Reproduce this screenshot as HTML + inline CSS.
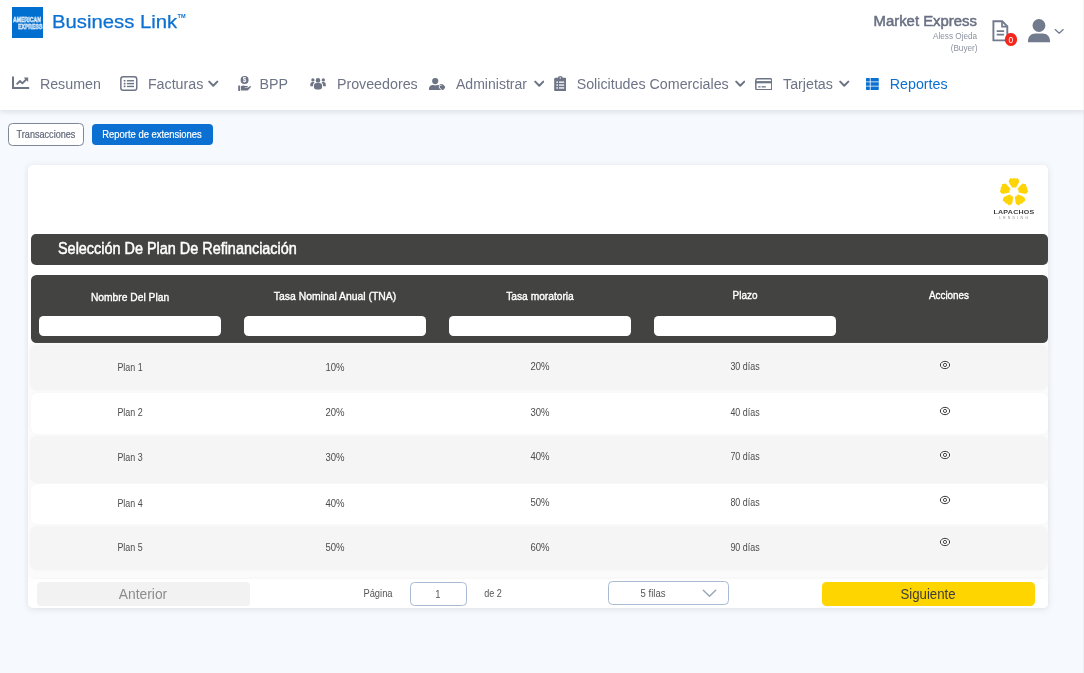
<!DOCTYPE html>
<html lang="es">
<head>
<meta charset="utf-8">
<title>Business Link</title>
<style>
*{box-sizing:border-box;margin:0;padding:0}
html,body{width:1084px;height:673px;overflow:hidden}
body{background:#f6f9fd;font-family:"Liberation Sans", sans-serif;position:relative}
</style>
</head>
<body>
<div style="position:absolute;left:0;top:0;width:1084px;height:673px;will-change:transform">
<div style="position:absolute;left:0px;top:0px;width:1084.00px;height:110.00px;background:#fff;border-radius:0px;box-shadow:0 2px 5px rgba(95,100,115,.17);"></div>
<div style="position:absolute;left:12px;top:7px;width:31.00px;height:30.50px;background:#016fd0;border-radius:0px;"></div>
<div style="position:absolute;top:16.07px;font-size:7.0px;line-height:7.0px;color:#2a86d8;font-weight:bold;white-space:nowrap;-webkit-text-stroke:.55px #fff;left:12.60px;transform-origin:0 50%;transform:scaleX(0.745);">AMERICAN</div>
<div style="position:absolute;top:22.87px;font-size:7.0px;line-height:7.0px;color:#2a86d8;font-weight:bold;white-space:nowrap;-webkit-text-stroke:.55px #fff;left:18.30px;transform-origin:0 50%;transform:scaleX(0.74);">EXPRESS</div>
<div style="position:absolute;top:12.32px;font-size:19px;line-height:19px;color:#0b70d1;font-weight:normal;white-space:nowrap;-webkit-text-stroke:.25px #0b70d1;left:52.20px;transform-origin:0 50%;transform:scaleX(1.068);">Business Link</div>
<div style="position:absolute;top:13.86px;font-size:5.6px;line-height:5.6px;color:#0b70d1;font-weight:bold;white-space:nowrap;left:177.60px;transform-origin:0 50%;transform:scaleX(1.0);">TM</div>
<div style="position:absolute;top:76.64px;font-size:14.25px;line-height:14.25px;color:#6d7486;font-weight:normal;white-space:nowrap;left:39.90px;transform-origin:0 50%;transform:scaleX(1);">Resumen</div>
<div style="position:absolute;top:76.64px;font-size:14.25px;line-height:14.25px;color:#6d7486;font-weight:normal;white-space:nowrap;left:147.90px;transform-origin:0 50%;transform:scaleX(1);">Facturas</div>
<div style="position:absolute;top:76.64px;font-size:14.25px;line-height:14.25px;color:#6d7486;font-weight:normal;white-space:nowrap;left:259.50px;transform-origin:0 50%;transform:scaleX(1);">BPP</div>
<div style="position:absolute;top:76.64px;font-size:14.25px;line-height:14.25px;color:#6d7486;font-weight:normal;white-space:nowrap;left:336.90px;transform-origin:0 50%;transform:scaleX(1);">Proveedores</div>
<div style="position:absolute;top:76.64px;font-size:14.25px;line-height:14.25px;color:#6d7486;font-weight:normal;white-space:nowrap;left:456.20px;transform-origin:0 50%;transform:scaleX(0.985);">Administrar</div>
<div style="position:absolute;top:76.64px;font-size:14.25px;line-height:14.25px;color:#6d7486;font-weight:normal;white-space:nowrap;left:576.70px;transform-origin:0 50%;transform:scaleX(1);">Solicitudes Comerciales</div>
<div style="position:absolute;top:76.64px;font-size:14.25px;line-height:14.25px;color:#6d7486;font-weight:normal;white-space:nowrap;left:783.00px;transform-origin:0 50%;transform:scaleX(1);">Tarjetas</div>
<div style="position:absolute;top:76.64px;font-size:14.25px;line-height:14.25px;color:#0b70d1;font-weight:normal;white-space:nowrap;left:889.80px;transform-origin:0 50%;transform:scaleX(1);">Reportes</div>
<svg style="position:absolute;left:208.4px;top:80.2px;" width="10.5" height="8" viewBox="0 0 10.5 8"><path d="M1.2 1.6 L5.25 5.8 L9.3 1.6" fill="none" stroke="#6d7486" stroke-width="2" stroke-linecap="round" stroke-linejoin="round"/></svg>
<svg style="position:absolute;left:533.9px;top:80.2px;" width="10.5" height="8" viewBox="0 0 10.5 8"><path d="M1.2 1.6 L5.25 5.8 L9.3 1.6" fill="none" stroke="#6d7486" stroke-width="2" stroke-linecap="round" stroke-linejoin="round"/></svg>
<svg style="position:absolute;left:734.9px;top:80.2px;" width="10.5" height="8" viewBox="0 0 10.5 8"><path d="M1.2 1.6 L5.25 5.8 L9.3 1.6" fill="none" stroke="#6d7486" stroke-width="2" stroke-linecap="round" stroke-linejoin="round"/></svg>
<svg style="position:absolute;left:839.1px;top:80.2px;" width="10.5" height="8" viewBox="0 0 10.5 8"><path d="M1.2 1.6 L5.25 5.8 L9.3 1.6" fill="none" stroke="#6d7486" stroke-width="2" stroke-linecap="round" stroke-linejoin="round"/></svg>
<svg style="position:absolute;left:12px;top:75.5px;" width="18" height="14" viewBox="0 0 18 14"><path d="M1 0.4V12H17.2" fill="none" stroke="#6d7486" stroke-width="2"/><path d="M4.6 8.4L8 5l2.4 2.3L14.6 3" fill="none" stroke="#6d7486" stroke-width="1.8" stroke-linejoin="round"/><path d="M11.6 1.4h4.6v4.6z" fill="#6d7486"/></svg>
<svg style="position:absolute;left:119.6px;top:76.2px;" width="18" height="15.4" viewBox="0 0 18 15.4"><rect x="0.85" y="0.85" width="15.900" height="13.500" rx="2.300" fill="none" stroke="#6d7486" stroke-width="1.500"/><g fill="#6d7486"><rect x="3.700" y="3.900" width="1.800" height="1.700" rx=".3"/><rect x="3.700" y="6.750" width="1.800" height="1.700" rx=".3"/><rect x="3.700" y="9.600" width="1.800" height="1.700" rx=".3"/><rect x="6.900" y="4.050" width="7.100" height="1.400"/><rect x="6.900" y="6.900" width="7.100" height="1.400"/><rect x="6.900" y="9.750" width="7.100" height="1.400"/></g></svg>
<svg style="position:absolute;left:237.6px;top:76px;" width="13" height="15.2" viewBox="0 0 13 15.2"><circle cx="6.6" cy="4" r="4" fill="#6d7486"/><text x="6.6" y="6.3" font-family='"Liberation Sans", sans-serif' font-size="6.4" font-weight="bold" text-anchor="middle" fill="#fff">$</text><rect x="0.2" y="9.6" width="2" height="5.4" rx=".4" fill="#6d7486"/><path d="M3 10.2c1.4-1 3-1 4.2-.2h2c.9 0 .9 1.3 0 1.3h-2.4v.5h3l2-1.6c.8-.6 1.6.4.9 1.1l-2.5 2.6c-.4.4-.8.6-1.400.6H3z" fill="#6d7486"/></svg>
<svg style="position:absolute;left:309.8px;top:77.6px;" width="16.6" height="12" viewBox="0 0 16.6 12"><g fill="#6d7486"><circle cx="8" cy="2.400" r="2.300"/><rect x="3.900" y="5.100" width="8.200" height="6.400" rx="2.700"/><circle cx="2.900" cy="1.900" r="1.650"/><circle cx="13.300" cy="1.900" r="1.650"/><path d="M0.300 8.200V6.400C.3 4.800 1.300 3.900 2.500 3.900h.9c.5 0 1 .2 1.300.5C3.600 5.100 3 6.200 3 7.500v.700z"/><path d="M15.800 8.200V6.400c0-1.600-1-2.500-2.200-2.500h-.9c-.5 0-1 .2-1.300.5 1.100.700 1.700 1.800 1.700 3.100v.700z"/></g></svg>
<svg style="position:absolute;left:429px;top:77.6px;" width="16.4" height="12.2" viewBox="0 0 16.4 12.2"><g fill="#6d7486"><circle cx="6.200" cy="3.100" r="3.100"/><path d="M0 12V10.600c0-2.100 1.700-3.500 3.700-3.500h.6c1.200.6 2.600.6 3.800 0h.600c.4 0 .8.100 1.200.2v2.400l2.300 2.300z"/><path d="M10.700 6.200h2.600c.3 0 .600.100.8.300l2.100 2.200c.3.300.3.700 0 1l-2.100 2.200c-.3.300-.7.300-1 0l-2.400-2.300z"/></g><circle cx="11.900" cy="7.500" r=".600" fill="#fff"/></svg>
<svg style="position:absolute;left:553.6px;top:75.6px;" width="12.6" height="15.6" viewBox="0 0 12.6 15.6"><rect x="0.2" y="1.800" width="12.200" height="13.600" rx="1.400" fill="#6d7486"/><path d="M3.800 2.400C3.800.8 5 0 6.300 0s2.500.8 2.500 2.400v1.400h-5z" fill="#6d7486"/><circle cx="6.300" cy="1.900" r=".7" fill="#fff"/><g fill="#fff"><rect x="2.400" y="5.400" width="1.500" height="1.500"/><rect x="2.400" y="8.300" width="1.500" height="1.500"/><rect x="2.400" y="11.200" width="1.500" height="1.500"/><rect x="5" y="5.500" width="5.200" height="1.300"/><rect x="5" y="8.400" width="5.200" height="1.300"/><rect x="5" y="11.300" width="5.200" height="1.300"/></g></svg>
<svg style="position:absolute;left:754.8px;top:77.6px;" width="17.6" height="12.6" viewBox="0 0 17.6 12.6"><rect x=".8" y=".8" width="16" height="11" rx="1.600" fill="none" stroke="#6d7486" stroke-width="1.500"/><rect x=".8" y="3.100" width="16" height="2.200" fill="#6d7486"/><rect x="3.200" y="8.200" width="2.400" height="1.300" fill="#6d7486"/><rect x="6.600" y="8.200" width="4.200" height="1.300" fill="#6d7486"/></svg>
<svg style="position:absolute;left:866.2px;top:77.9px;" width="12.8" height="12" viewBox="0 0 12.8 12"><g fill="#0b70d1"><path d="M0 1C0 .4.400 0 1 0h2.800v3.500H0z"/><rect x="0" y="4.250" width="3.800" height="3.500"/><path d="M0 8.500h3.800V12H1c-.6 0-1-.4-1-1z"/><path d="M4.600 0h7.200c.6 0 1 .4 1 1v2.500H4.600z"/><rect x="4.600" y="4.250" width="8.200" height="3.500"/><path d="M4.600 8.500h8.200V11c0 .6-.4 1-1 1H4.600z"/></g></svg>
<div style="position:absolute;top:13.76px;font-size:14.7px;line-height:14.7px;color:#697083;font-weight:normal;white-space:nowrap;-webkit-text-stroke:.5px #697083;right:106.60px;transform-origin:100% 50%;transform:scaleX(1.015);">Market Express</div>
<div style="position:absolute;top:32.03px;font-size:9.3px;line-height:9.3px;color:#8b91a0;font-weight:normal;white-space:nowrap;right:106.40px;transform-origin:100% 50%;transform:scaleX(0.88);">Aless Ojeda</div>
<div style="position:absolute;top:43.63px;font-size:9.3px;line-height:9.3px;color:#8b91a0;font-weight:normal;white-space:nowrap;right:106.40px;transform-origin:100% 50%;transform:scaleX(0.88);">(Buyer)</div>
<svg style="position:absolute;left:991.6px;top:19.8px;" width="17" height="22" viewBox="0 0 17 22"><path d="M1.400 1.300H10.200L15.300 6.400V20.400H1.400z" fill="none" stroke="#727a8d" stroke-width="1.900" stroke-linejoin="miter"/><path d="M10 1.400V6.600H15.200" fill="none" stroke="#727a8d" stroke-width="1.700"/><path d="M4.700 11.100h7.400M4.700 14.700h7.400" stroke="#727a8d" stroke-width="1.700"/></svg>
<div style="position:absolute;left:1003.6px;top:32.7px;width:13.6px;height:13.6px;border-radius:50%;background:#f4271c;color:#fff;font-size:9.5px;line-height:13.8px;text-align:center;transform:scaleX(.88)">0</div>
<svg style="position:absolute;left:1028px;top:19.4px;" width="22" height="23.4" viewBox="0 0 22 23.4"><circle cx="10.950" cy="6.500" r="6.450" fill="#727a8d"/><path d="M0 23.300v-1.300c0-4.700 3.600-7.400 7-7.400h8c3.400 0 7 2.700 7 7.400v1.300z" fill="#727a8d"/></svg>
<svg style="position:absolute;left:1054.3px;top:27.5px;" width="10.4" height="7.4" viewBox="0 0 10.4 7.4"><path d="M1.2 1.6 L5.2 5.2 L9.200000000000001 1.6" fill="none" stroke="#727a8d" stroke-width="1.3" stroke-linecap="round" stroke-linejoin="round"/></svg>
<div style="position:absolute;left:1083px;top:0px;width:1.00px;height:673.00px;background:rgba(120,120,120,.08);border-radius:0px;"></div>
<div style="position:absolute;left:8.2px;top:123px;width:75.600px;height:23px;border:1px solid #7e8697;border-radius:4.500px;background:#fff"></div>
<div style="position:absolute;top:129.90px;font-size:10.4px;line-height:10.4px;color:#5f6677;font-weight:normal;white-space:nowrap;-webkit-text-stroke:.2px #5f6677;left:46.10px;transform:translateX(-50%) scaleX(0.875);">Transacciones</div>
<div style="position:absolute;left:91.6px;top:123.8px;width:121.40px;height:21.50px;background:#0b70d1;border-radius:4px;"></div>
<div style="position:absolute;top:129.90px;font-size:10.4px;line-height:10.4px;color:#fff;font-weight:normal;white-space:nowrap;-webkit-text-stroke:.2px #fff;left:152.40px;transform:translateX(-50%) scaleX(0.905);">Reporte de extensiones</div>
<div style="position:absolute;left:28px;top:165px;width:1020.00px;height:443.00px;background:#fff;border-radius:5px;box-shadow:0 1px 6px rgba(90,95,108,.16);"></div>
<div style="position:absolute;left:31px;top:234px;width:1017.00px;height:31.00px;background:#434341;border-radius:5px;"></div>
<div style="position:absolute;top:241.16px;font-size:16px;line-height:16px;color:#fff;font-weight:normal;white-space:nowrap;-webkit-text-stroke:.5px #fff;left:58.30px;transform-origin:0 50%;transform:scaleX(0.901);">Selección De Plan De Refinanciación</div>
<div style="position:absolute;left:31px;top:275px;width:1017.00px;height:68.00px;background:#434341;border-radius:5.5px;"></div>
<div style="position:absolute;top:291.10px;font-size:11.7px;line-height:11.7px;color:#fff;font-weight:normal;white-space:nowrap;-webkit-text-stroke:.4px #fff;left:130.25px;transform:translateX(-50%) scaleX(0.879);">Nombre Del Plan</div>
<div style="position:absolute;top:290.20px;font-size:11.7px;line-height:11.7px;color:#fff;font-weight:normal;white-space:nowrap;-webkit-text-stroke:.4px #fff;left:335.00px;transform:translateX(-50%) scaleX(0.888);">Tasa Nominal Anual (TNA)</div>
<div style="position:absolute;top:290.20px;font-size:11.7px;line-height:11.7px;color:#fff;font-weight:normal;white-space:nowrap;-webkit-text-stroke:.4px #fff;left:539.90px;transform:translateX(-50%) scaleX(0.874);">Tasa moratoria</div>
<div style="position:absolute;top:289.40px;font-size:11.7px;line-height:11.7px;color:#fff;font-weight:normal;white-space:nowrap;-webkit-text-stroke:.4px #fff;left:744.60px;transform:translateX(-50%) scaleX(0.851);">Plazo</div>
<div style="position:absolute;top:289.30px;font-size:11.7px;line-height:11.7px;color:#fff;font-weight:normal;white-space:nowrap;-webkit-text-stroke:.4px #fff;left:949.00px;transform:translateX(-50%) scaleX(0.841);">Acciones</div>
<div style="position:absolute;left:39px;top:316px;width:182.30px;height:20.00px;background:#fff;border-radius:4.5px;"></div>
<div style="position:absolute;left:244px;top:316px;width:182.30px;height:20.00px;background:#fff;border-radius:4.5px;"></div>
<div style="position:absolute;left:448.6px;top:316px;width:182.30px;height:20.00px;background:#fff;border-radius:4.5px;"></div>
<div style="position:absolute;left:654px;top:316px;width:182.30px;height:20.00px;background:#fff;border-radius:4.5px;"></div>
<div style="position:absolute;left:28px;top:343px;width:1020.00px;height:235.00px;background:#fbfbfb;border-radius:0px;"></div>
<div style="position:absolute;left:30px;top:344.5px;width:1017.50px;height:45.60px;background:#f5f5f5;border-radius:7px;box-shadow:0 0 3px #f5f5f5;"></div>
<div style="position:absolute;top:362.23px;font-size:10.6px;line-height:10.6px;color:#4d4d4d;font-weight:normal;white-space:nowrap;left:130.25px;transform:translateX(-50%) scaleX(0.84);">Plan 1</div>
<div style="position:absolute;top:362.23px;font-size:10.6px;line-height:10.6px;color:#4d4d4d;font-weight:normal;white-space:nowrap;left:335.00px;transform:translateX(-50%) scaleX(0.9);">10%</div>
<div style="position:absolute;top:361.43px;font-size:10.6px;line-height:10.6px;color:#4d4d4d;font-weight:normal;white-space:nowrap;left:539.90px;transform:translateX(-50%) scaleX(0.9);">20%</div>
<div style="position:absolute;top:361.43px;font-size:10.6px;line-height:10.6px;color:#4d4d4d;font-weight:normal;white-space:nowrap;left:744.60px;transform:translateX(-50%) scaleX(0.84);">30 días</div>
<svg style="position:absolute;left:939.1px;top:359.75px;" width="12" height="10" viewBox="0 0 12 10"><ellipse cx="6" cy="5" rx="4.650" ry="3.650" fill="none" stroke="#fff" stroke-opacity=".7" stroke-width="2.600"/><ellipse cx="6" cy="5" rx="4.650" ry="3.650" fill="none" stroke="#3a3a3a" stroke-width="1"/><circle cx="6" cy="4.950" r="1.600" fill="#fff" stroke="#3a3a3a" stroke-width=".9"/></svg>
<div style="position:absolute;left:30.5px;top:393px;width:1017.00px;height:41.20px;background:#fff;border-radius:6px;box-shadow:0 0 3px rgba(0,0,0,.03);"></div>
<div style="position:absolute;top:407.33px;font-size:10.6px;line-height:10.6px;color:#4d4d4d;font-weight:normal;white-space:nowrap;left:130.25px;transform:translateX(-50%) scaleX(0.84);">Plan 2</div>
<div style="position:absolute;top:407.33px;font-size:10.6px;line-height:10.6px;color:#4d4d4d;font-weight:normal;white-space:nowrap;left:335.00px;transform:translateX(-50%) scaleX(0.9);">20%</div>
<div style="position:absolute;top:406.53px;font-size:10.6px;line-height:10.6px;color:#4d4d4d;font-weight:normal;white-space:nowrap;left:539.90px;transform:translateX(-50%) scaleX(0.9);">30%</div>
<div style="position:absolute;top:406.53px;font-size:10.6px;line-height:10.6px;color:#4d4d4d;font-weight:normal;white-space:nowrap;left:744.60px;transform:translateX(-50%) scaleX(0.84);">40 días</div>
<svg style="position:absolute;left:939.1px;top:405.5px;" width="12" height="10" viewBox="0 0 12 10"><ellipse cx="6" cy="5" rx="4.650" ry="3.650" fill="none" stroke="#fff" stroke-opacity=".7" stroke-width="2.600"/><ellipse cx="6" cy="5" rx="4.650" ry="3.650" fill="none" stroke="#3a3a3a" stroke-width="1"/><circle cx="6" cy="4.950" r="1.600" fill="#fff" stroke="#3a3a3a" stroke-width=".9"/></svg>
<div style="position:absolute;left:30px;top:435.5px;width:1017.50px;height:47.00px;background:#f5f5f5;border-radius:7px;box-shadow:0 0 3px #f5f5f5;"></div>
<div style="position:absolute;top:452.03px;font-size:10.6px;line-height:10.6px;color:#4d4d4d;font-weight:normal;white-space:nowrap;left:130.25px;transform:translateX(-50%) scaleX(0.84);">Plan 3</div>
<div style="position:absolute;top:452.03px;font-size:10.6px;line-height:10.6px;color:#4d4d4d;font-weight:normal;white-space:nowrap;left:335.00px;transform:translateX(-50%) scaleX(0.9);">30%</div>
<div style="position:absolute;top:451.23px;font-size:10.6px;line-height:10.6px;color:#4d4d4d;font-weight:normal;white-space:nowrap;left:539.90px;transform:translateX(-50%) scaleX(0.9);">40%</div>
<div style="position:absolute;top:451.23px;font-size:10.6px;line-height:10.6px;color:#4d4d4d;font-weight:normal;white-space:nowrap;left:744.60px;transform:translateX(-50%) scaleX(0.84);">70 días</div>
<svg style="position:absolute;left:939.1px;top:450.3px;" width="12" height="10" viewBox="0 0 12 10"><ellipse cx="6" cy="5" rx="4.650" ry="3.650" fill="none" stroke="#fff" stroke-opacity=".7" stroke-width="2.600"/><ellipse cx="6" cy="5" rx="4.650" ry="3.650" fill="none" stroke="#3a3a3a" stroke-width="1"/><circle cx="6" cy="4.950" r="1.600" fill="#fff" stroke="#3a3a3a" stroke-width=".9"/></svg>
<div style="position:absolute;left:30.5px;top:483.5px;width:1017.00px;height:40.80px;background:#fff;border-radius:6px;box-shadow:0 0 3px rgba(0,0,0,.03);"></div>
<div style="position:absolute;top:497.53px;font-size:10.6px;line-height:10.6px;color:#4d4d4d;font-weight:normal;white-space:nowrap;left:130.25px;transform:translateX(-50%) scaleX(0.84);">Plan 4</div>
<div style="position:absolute;top:497.53px;font-size:10.6px;line-height:10.6px;color:#4d4d4d;font-weight:normal;white-space:nowrap;left:335.00px;transform:translateX(-50%) scaleX(0.9);">40%</div>
<div style="position:absolute;top:496.73px;font-size:10.6px;line-height:10.6px;color:#4d4d4d;font-weight:normal;white-space:nowrap;left:539.90px;transform:translateX(-50%) scaleX(0.9);">50%</div>
<div style="position:absolute;top:496.73px;font-size:10.6px;line-height:10.6px;color:#4d4d4d;font-weight:normal;white-space:nowrap;left:744.60px;transform:translateX(-50%) scaleX(0.84);">80 días</div>
<svg style="position:absolute;left:939.1px;top:495.0px;" width="12" height="10" viewBox="0 0 12 10"><ellipse cx="6" cy="5" rx="4.650" ry="3.650" fill="none" stroke="#fff" stroke-opacity=".7" stroke-width="2.600"/><ellipse cx="6" cy="5" rx="4.650" ry="3.650" fill="none" stroke="#3a3a3a" stroke-width="1"/><circle cx="6" cy="4.950" r="1.600" fill="#fff" stroke="#3a3a3a" stroke-width=".9"/></svg>
<div style="position:absolute;left:30px;top:525.5px;width:1017.50px;height:44.80px;background:#f5f5f5;border-radius:7px;box-shadow:0 0 3px #f5f5f5;"></div>
<div style="position:absolute;top:542.43px;font-size:10.6px;line-height:10.6px;color:#4d4d4d;font-weight:normal;white-space:nowrap;left:130.25px;transform:translateX(-50%) scaleX(0.84);">Plan 5</div>
<div style="position:absolute;top:542.43px;font-size:10.6px;line-height:10.6px;color:#4d4d4d;font-weight:normal;white-space:nowrap;left:335.00px;transform:translateX(-50%) scaleX(0.9);">50%</div>
<div style="position:absolute;top:541.63px;font-size:10.6px;line-height:10.6px;color:#4d4d4d;font-weight:normal;white-space:nowrap;left:539.90px;transform:translateX(-50%) scaleX(0.9);">60%</div>
<div style="position:absolute;top:541.63px;font-size:10.6px;line-height:10.6px;color:#4d4d4d;font-weight:normal;white-space:nowrap;left:744.60px;transform:translateX(-50%) scaleX(0.84);">90 días</div>
<svg style="position:absolute;left:939.1px;top:537.2px;" width="12" height="10" viewBox="0 0 12 10"><ellipse cx="6" cy="5" rx="4.650" ry="3.650" fill="none" stroke="#fff" stroke-opacity=".7" stroke-width="2.600"/><ellipse cx="6" cy="5" rx="4.650" ry="3.650" fill="none" stroke="#3a3a3a" stroke-width="1"/><circle cx="6" cy="4.950" r="1.600" fill="#fff" stroke="#3a3a3a" stroke-width=".9"/></svg>
<div style="position:absolute;left:30px;top:578.5px;width:1017.50px;height:29.00px;background:#fff;border-radius:5px;box-shadow:0 -1px 2px rgba(0,0,0,.04);"></div>
<div style="position:absolute;left:37.4px;top:582.2px;width:212.70px;height:23.40px;background:#f2f2f2;border-radius:4px;"></div>
<div style="position:absolute;top:585.90px;font-size:15px;line-height:15px;color:#8c8c8c;font-weight:normal;white-space:nowrap;left:143.30px;transform:translateX(-50%) scaleX(0.92);">Anterior</div>
<div style="position:absolute;top:587.59px;font-size:11px;line-height:11px;color:#555;font-weight:normal;white-space:nowrap;left:378.00px;transform:translateX(-50%) scaleX(0.85);">Página</div>
<div style="position:absolute;left:410.2px;top:582.2px;width:57.200px;height:23.400px;border:1px solid #a9bbd2;border-radius:4.500px;background:#fff"></div>
<div style="position:absolute;top:588.61px;font-size:10.5px;line-height:10.5px;color:#555;font-weight:normal;white-space:nowrap;left:437.60px;transform:translateX(-50%) scaleX(0.9);">1</div>
<div style="position:absolute;top:587.59px;font-size:11px;line-height:11px;color:#555;font-weight:normal;white-space:nowrap;left:493.30px;transform:translateX(-50%) scaleX(0.82);">de 2</div>
<div style="position:absolute;left:608.200px;top:581.400px;width:120.600px;height:23.800px;border:1px solid #a9bbd2;border-radius:4.500px;background:#fff"></div>
<div style="position:absolute;top:587.59px;font-size:11px;line-height:11px;color:#555;font-weight:normal;white-space:nowrap;left:652.90px;transform:translateX(-50%) scaleX(0.87);">5 filas</div>
<svg style="position:absolute;left:702.05px;top:589.35px;" width="15" height="9" viewBox="0 0 15 9"><path d="M1.300 1.300L7.500 7.200L13.700 1.300" fill="none" stroke="#9aa7ba" stroke-width="1.500" stroke-linecap="round" stroke-linejoin="round"/></svg>
<div style="position:absolute;left:822px;top:582.2px;width:213.20px;height:23.40px;background:#ffd500;border-radius:4.5px;"></div>
<div style="position:absolute;top:585.80px;font-size:15px;line-height:15px;color:#3c3c3c;font-weight:normal;white-space:nowrap;left:928.40px;transform:translateX(-50%) scaleX(0.88);">Siguiente</div>
<svg style="position:absolute;left:998.1px;top:176.2px;" width="32" height="32" viewBox="-16 -16 32 32"><defs><radialGradient id="cg"><stop offset="0" stop-color="#fff"/><stop offset=".66" stop-color="#fff"/><stop offset="1" stop-color="#fff" stop-opacity="0"/></radialGradient></defs><path transform="rotate(0)" d="M-1.400 -3.200L-4.900 -9.400C-5.300 -10.200 -5.300 -11 -5 -11.700L-3.700 -13.900L-1.850 -13.300L0 -14.100L1.850 -13.300L3.700 -13.900L5 -11.700C5.300 -11 5.300 -10.200 4.900 -9.400L1.400 -3.200z" fill="#fdd405"/><path transform="rotate(72)" d="M-1.400 -3.200L-4.900 -9.400C-5.300 -10.200 -5.300 -11 -5 -11.700L-3.700 -13.900L-1.850 -13.300L0 -14.100L1.850 -13.300L3.700 -13.900L5 -11.700C5.300 -11 5.300 -10.200 4.900 -9.400L1.400 -3.200z" fill="#fdd405"/><path transform="rotate(144)" d="M-1.400 -3.200L-4.900 -9.400C-5.300 -10.200 -5.300 -11 -5 -11.700L-3.700 -13.900L-1.850 -13.300L0 -14.100L1.850 -13.300L3.700 -13.900L5 -11.700C5.300 -11 5.300 -10.200 4.900 -9.400L1.400 -3.200z" fill="#fdd405"/><path transform="rotate(216)" d="M-1.400 -3.200L-4.900 -9.400C-5.300 -10.200 -5.300 -11 -5 -11.700L-3.700 -13.900L-1.850 -13.300L0 -14.100L1.850 -13.300L3.700 -13.900L5 -11.700C5.300 -11 5.300 -10.200 4.900 -9.400L1.400 -3.200z" fill="#fdd405"/><path transform="rotate(288)" d="M-1.400 -3.200L-4.900 -9.400C-5.300 -10.200 -5.300 -11 -5 -11.700L-3.700 -13.900L-1.850 -13.300L0 -14.100L1.850 -13.300L3.700 -13.900L5 -11.700C5.300 -11 5.300 -10.200 4.900 -9.400L1.400 -3.200z" fill="#fdd405"/><circle r="5.600" fill="url(#cg)"/></svg>
<div style="position:absolute;top:209.66px;font-size:5.6px;line-height:5.6px;color:#3a3a3a;font-weight:bold;white-space:nowrap;letter-spacing:.2px;left:1013.85px;transform:translateX(-50%) scaleX(1.26);">LAPACHOS</div>
<div style="position:absolute;top:217.25px;font-size:3.6px;line-height:3.6px;color:#8a8a8a;font-weight:normal;white-space:nowrap;letter-spacing:2.150px;left:1014.70px;transform:translateX(-50%) scaleX(1.0);">LENDING</div>
</div>
</body>
</html>
